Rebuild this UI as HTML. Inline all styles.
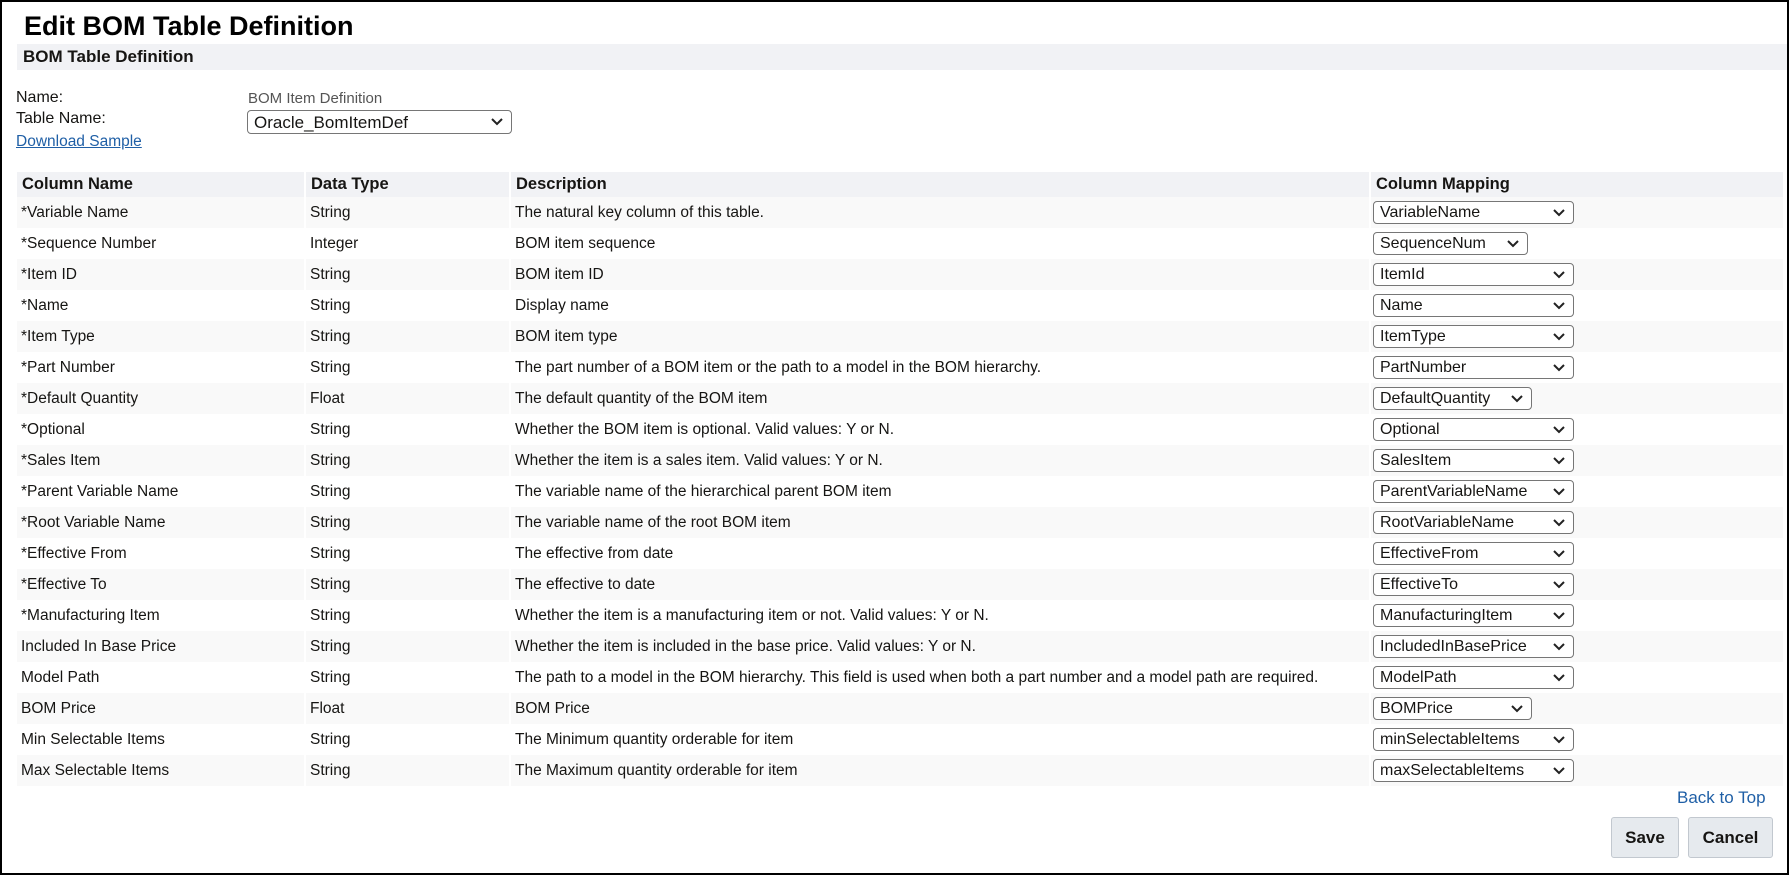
<!DOCTYPE html>
<html><head><meta charset="utf-8"><style>
*{box-sizing:border-box;margin:0;padding:0}
html,body{width:1789px;height:875px;overflow:hidden;background:#fff}
body{font-family:"Liberation Sans",Arial,sans-serif;color:#161513;position:relative;border:2px solid #000}
.abs{position:absolute}
h1{position:absolute;left:22px;top:9px;font-size:27px;font-weight:bold;color:#000}
.bar{position:absolute;left:15px;top:42px;width:1770px;height:26px;background:#f1f2f5;font-weight:bold;font-size:17px;padding:3px 0 0 6px}
.lbl{position:absolute;font-size:16px;color:#161513}
a{color:#1f5fa6}
.sel{position:absolute;height:23px;border:1px solid #767676;border-radius:4px;background:#fff;font-size:16px;padding:2px 0 0 6px;white-space:nowrap;overflow:hidden}
.sel svg{position:absolute;right:7px;top:6px}
table{position:absolute;left:15px;top:170px;border-collapse:collapse;width:1768px;table-layout:fixed}
td,th{height:31px;font-size:15.5px;text-align:left;padding:0 0 0 4px;border-right:2px solid #fff;vertical-align:middle;position:relative;white-space:nowrap}
th{height:25px;background:#f1f2f5;font-size:16.5px;font-weight:bold;padding-left:5px}
tr.g td{background:#f9f9f9}
.btn{position:absolute;top:815px;height:41px;background:#e6eaee;border:1px solid #c2c8cf;border-radius:3px;font-weight:bold;font-size:17px;text-align:center;line-height:39px;color:#161513}
</style></head><body>
<h1>Edit BOM Table Definition</h1>
<div class="bar">BOM Table Definition</div>
<div class="lbl" style="left:14px;top:87px">Name:</div>
<div class="lbl" style="left:14px;top:108px">Table Name:</div>
<div class="lbl" style="left:14px;top:131px"><a href="#" style="font-size:15.5px">Download Sample</a></div>
<div class="lbl" style="left:246px;top:88px;color:#555;font-size:15px">BOM Item Definition</div>
<div class="sel" style="left:245px;top:108px;width:265px;height:24px;font-size:17px;padding-top:2px">Oracle_BomItemDef<svg width="14" height="10" viewBox="0 0 14 10"><path d="M2 2L7 7L12 2" fill="none" stroke="#222" stroke-width="2"/></svg></div>
<table>
<colgroup><col style="width:288px"><col style="width:205px"><col style="width:860px"><col></colgroup>
<tr><th>Column Name</th><th>Data Type</th><th>Description</th><th>Column Mapping</th></tr>
<tr class="g"><td>*Variable Name</td><td>String</td><td>The natural key column of this table.</td><td><div class="sel" style="left:2px;top:4px;width:201px">VariableName<svg width="14" height="10" viewBox="0 0 14 10"><path d="M2 2L7 7L12 2" fill="none" stroke="#222" stroke-width="2"/></svg></div></td></tr>
<tr><td>*Sequence Number</td><td>Integer</td><td>BOM item sequence</td><td><div class="sel" style="left:2px;top:4px;width:155px">SequenceNum<svg width="14" height="10" viewBox="0 0 14 10"><path d="M2 2L7 7L12 2" fill="none" stroke="#222" stroke-width="2"/></svg></div></td></tr>
<tr class="g"><td>*Item ID</td><td>String</td><td>BOM item ID</td><td><div class="sel" style="left:2px;top:4px;width:201px">ItemId<svg width="14" height="10" viewBox="0 0 14 10"><path d="M2 2L7 7L12 2" fill="none" stroke="#222" stroke-width="2"/></svg></div></td></tr>
<tr><td>*Name</td><td>String</td><td>Display name</td><td><div class="sel" style="left:2px;top:4px;width:201px">Name<svg width="14" height="10" viewBox="0 0 14 10"><path d="M2 2L7 7L12 2" fill="none" stroke="#222" stroke-width="2"/></svg></div></td></tr>
<tr class="g"><td>*Item Type</td><td>String</td><td>BOM item type</td><td><div class="sel" style="left:2px;top:4px;width:201px">ItemType<svg width="14" height="10" viewBox="0 0 14 10"><path d="M2 2L7 7L12 2" fill="none" stroke="#222" stroke-width="2"/></svg></div></td></tr>
<tr><td>*Part Number</td><td>String</td><td>The part number of a BOM item or the path to a model in the BOM hierarchy.</td><td><div class="sel" style="left:2px;top:4px;width:201px">PartNumber<svg width="14" height="10" viewBox="0 0 14 10"><path d="M2 2L7 7L12 2" fill="none" stroke="#222" stroke-width="2"/></svg></div></td></tr>
<tr class="g"><td>*Default Quantity</td><td>Float</td><td>The default quantity of the BOM item</td><td><div class="sel" style="left:2px;top:4px;width:159px">DefaultQuantity<svg width="14" height="10" viewBox="0 0 14 10"><path d="M2 2L7 7L12 2" fill="none" stroke="#222" stroke-width="2"/></svg></div></td></tr>
<tr><td>*Optional</td><td>String</td><td>Whether the BOM item is optional. Valid values: Y or N.</td><td><div class="sel" style="left:2px;top:4px;width:201px">Optional<svg width="14" height="10" viewBox="0 0 14 10"><path d="M2 2L7 7L12 2" fill="none" stroke="#222" stroke-width="2"/></svg></div></td></tr>
<tr class="g"><td>*Sales Item</td><td>String</td><td>Whether the item is a sales item. Valid values: Y or N.</td><td><div class="sel" style="left:2px;top:4px;width:201px">SalesItem<svg width="14" height="10" viewBox="0 0 14 10"><path d="M2 2L7 7L12 2" fill="none" stroke="#222" stroke-width="2"/></svg></div></td></tr>
<tr><td>*Parent Variable Name</td><td>String</td><td>The variable name of the hierarchical parent BOM item</td><td><div class="sel" style="left:2px;top:4px;width:201px">ParentVariableName<svg width="14" height="10" viewBox="0 0 14 10"><path d="M2 2L7 7L12 2" fill="none" stroke="#222" stroke-width="2"/></svg></div></td></tr>
<tr class="g"><td>*Root Variable Name</td><td>String</td><td>The variable name of the root BOM item</td><td><div class="sel" style="left:2px;top:4px;width:201px">RootVariableName<svg width="14" height="10" viewBox="0 0 14 10"><path d="M2 2L7 7L12 2" fill="none" stroke="#222" stroke-width="2"/></svg></div></td></tr>
<tr><td>*Effective From</td><td>String</td><td>The effective from date</td><td><div class="sel" style="left:2px;top:4px;width:201px">EffectiveFrom<svg width="14" height="10" viewBox="0 0 14 10"><path d="M2 2L7 7L12 2" fill="none" stroke="#222" stroke-width="2"/></svg></div></td></tr>
<tr class="g"><td>*Effective To</td><td>String</td><td>The effective to date</td><td><div class="sel" style="left:2px;top:4px;width:201px">EffectiveTo<svg width="14" height="10" viewBox="0 0 14 10"><path d="M2 2L7 7L12 2" fill="none" stroke="#222" stroke-width="2"/></svg></div></td></tr>
<tr><td>*Manufacturing Item</td><td>String</td><td>Whether the item is a manufacturing item or not. Valid values: Y or N.</td><td><div class="sel" style="left:2px;top:4px;width:201px">ManufacturingItem<svg width="14" height="10" viewBox="0 0 14 10"><path d="M2 2L7 7L12 2" fill="none" stroke="#222" stroke-width="2"/></svg></div></td></tr>
<tr class="g"><td>Included In Base Price</td><td>String</td><td>Whether the item is included in the base price. Valid values: Y or N.</td><td><div class="sel" style="left:2px;top:4px;width:201px">IncludedInBasePrice<svg width="14" height="10" viewBox="0 0 14 10"><path d="M2 2L7 7L12 2" fill="none" stroke="#222" stroke-width="2"/></svg></div></td></tr>
<tr><td>Model Path</td><td>String</td><td>The path to a model in the BOM hierarchy. This field is used when both a part number and a model path are required.</td><td><div class="sel" style="left:2px;top:4px;width:201px">ModelPath<svg width="14" height="10" viewBox="0 0 14 10"><path d="M2 2L7 7L12 2" fill="none" stroke="#222" stroke-width="2"/></svg></div></td></tr>
<tr class="g"><td>BOM Price</td><td>Float</td><td>BOM Price</td><td><div class="sel" style="left:2px;top:4px;width:159px">BOMPrice<svg width="14" height="10" viewBox="0 0 14 10"><path d="M2 2L7 7L12 2" fill="none" stroke="#222" stroke-width="2"/></svg></div></td></tr>
<tr><td>Min Selectable Items</td><td>String</td><td>The Minimum quantity orderable for item</td><td><div class="sel" style="left:2px;top:4px;width:201px">minSelectableItems<svg width="14" height="10" viewBox="0 0 14 10"><path d="M2 2L7 7L12 2" fill="none" stroke="#222" stroke-width="2"/></svg></div></td></tr>
<tr class="g"><td>Max Selectable Items</td><td>String</td><td>The Maximum quantity orderable for item</td><td><div class="sel" style="left:2px;top:4px;width:201px">maxSelectableItems<svg width="14" height="10" viewBox="0 0 14 10"><path d="M2 2L7 7L12 2" fill="none" stroke="#222" stroke-width="2"/></svg></div></td></tr>
</table>
<div class="lbl" style="left:1675px;top:786px;font-size:17px;color:#1f5fa6">Back to Top</div>
<div class="btn" style="left:1609px;width:68px">Save</div>
<div class="btn" style="left:1686px;width:85px">Cancel</div>
</body></html>
